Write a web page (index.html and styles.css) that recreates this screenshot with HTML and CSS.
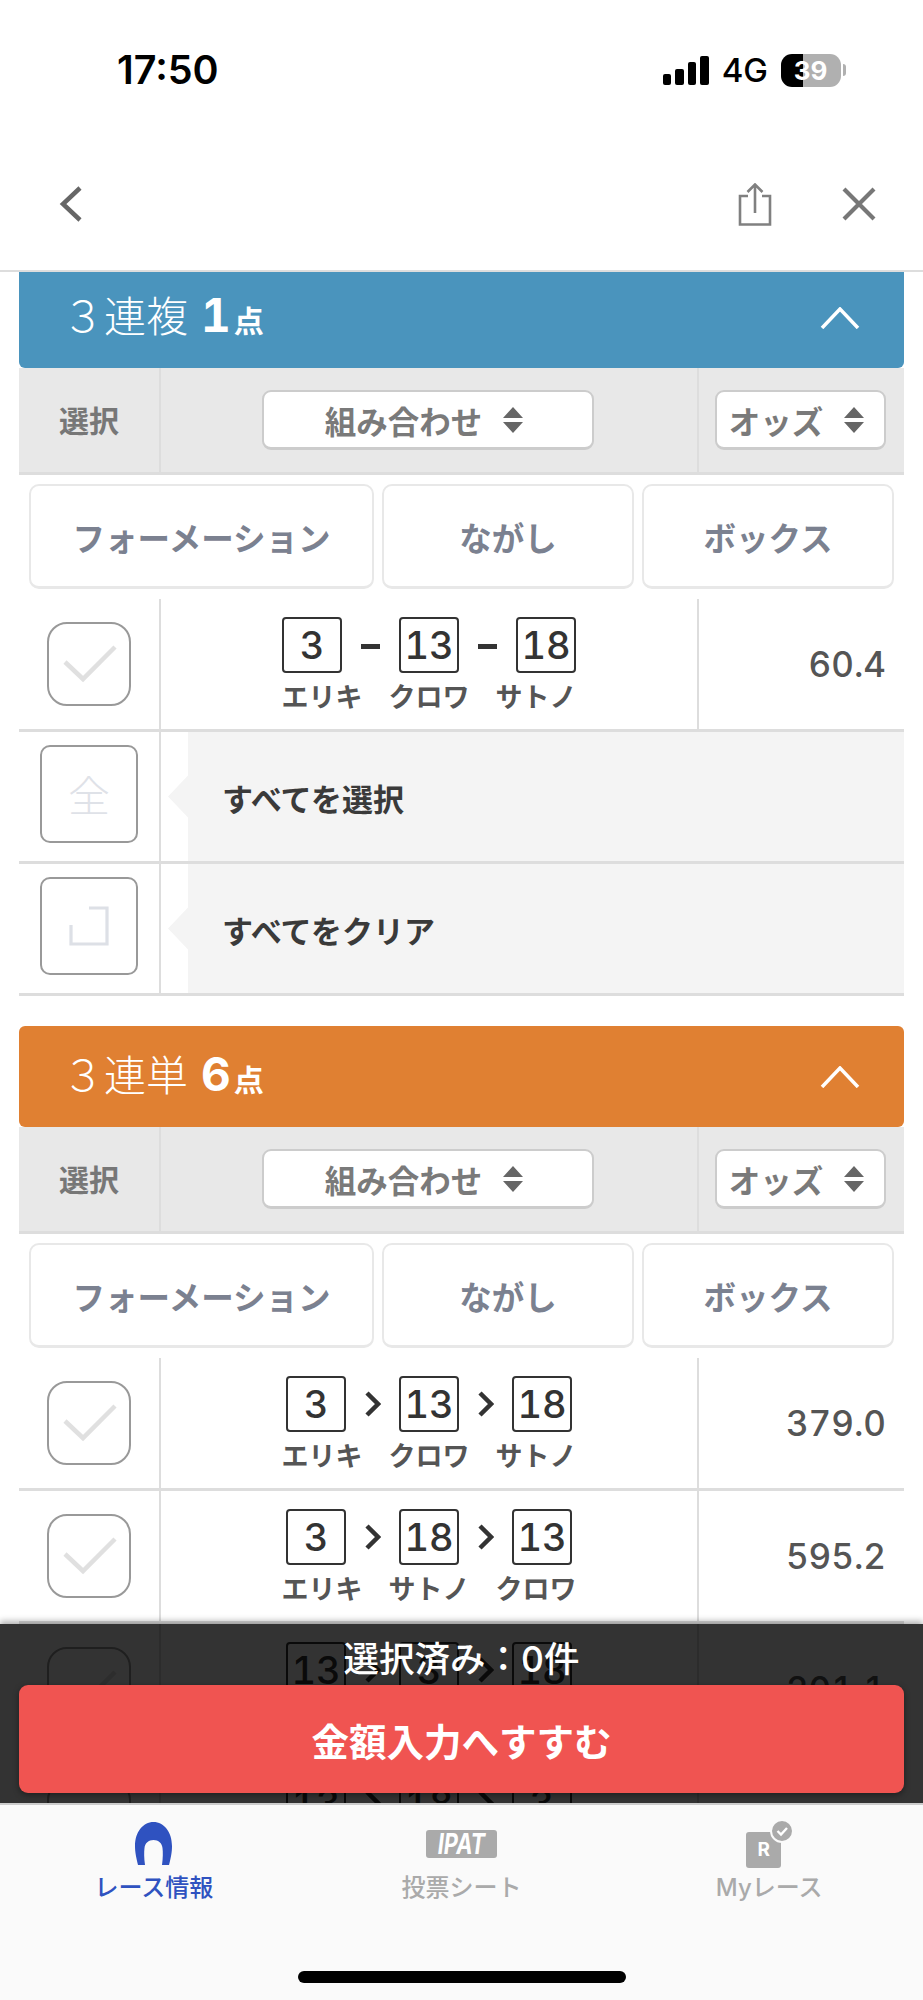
FILE: index.html
```html
<!DOCTYPE html>
<html lang="ja">
<head>
<meta charset="utf-8">
<title>3連複</title>
<link rel="stylesheet" href="styles.css">
</head>
<body>
<svg class="defs" width="0" height="0" aria-hidden="true">
  <symbol id="check" viewBox="0 0 79 79"><polyline points="16,38 34,55 66,23" fill="none" stroke="#e0e0e0" stroke-width="4.5"/></symbol>
  <symbol id="sort" viewBox="0 0 20 26"><path d="M10 0 L20 11 H0 Z M0 15 H20 L10 26 Z" fill="#666"/></symbol>
  <symbol id="up" viewBox="0 0 40 22"><polyline points="2,21 20,2 38,21" fill="none" stroke="#fff" stroke-width="3.5"/></symbol>
  <symbol id="gt" viewBox="0 0 17 26"><polyline points="3,2 14,13 3,24" fill="none" stroke="#333" stroke-width="4.5"/></symbol>
</svg>
<div class="app">
  <div class="status">
    <span class="time">17:50</span>
    <div class="status-right">
      <div class="signal"><i class="b1"></i><i class="b2"></i><i class="b3"></i><i class="b4"></i></div>
      <span class="net">4G</span>
      <div class="battery"><span>39</span></div>
      <i class="battery-cap"></i>
    </div>
  </div>
  <div class="nav">
    <svg class="nav-back" width="24" height="36" viewBox="0 0 24 36"><polyline points="21,2 4,18 21,34" fill="none" stroke="#666" stroke-width="4.5"/></svg>
    <div class="nav-right">
      <svg width="34" height="43" viewBox="0 0 34 43"><path d="M10 13 H2 V41.5 H32 V13 H24 M17 30 V2 M9.5 9 L17 1.5 L24.5 9" fill="none" stroke="#808080" stroke-width="2.6"/></svg>
      <svg width="36" height="36" viewBox="0 0 36 36"><path d="M3 3 L33 33 M33 3 L3 33" fill="none" stroke="#777" stroke-width="4.2"/></svg>
    </div>
  </div>

  <div class="main">
    <div class="content">
      <section class="sec">
        <div class="head head-blue">
          <div class="head-title">３連複<b>1</b><em>点</em></div>
          <svg width="40" height="22"><use href="#up"/></svg>
        </div>
        <div class="cols sortrow">
          <div class="cell sort-label">選択</div>
          <div class="cell line"><div class="sortbtn wide">組み合わせ<svg width="20" height="26"><use href="#sort"/></svg></div></div>
          <div class="cell line"><div class="sortbtn odd">オッズ<svg width="20" height="26"><use href="#sort"/></svg></div></div>
        </div>
        <div class="tabs"><div class="tab">フォーメーション</div><div class="tab">ながし</div><div class="tab">ボックス</div></div>
        <div class="cols row">
          <div class="cell"><div class="chk"><svg width="79" height="79"><use href="#check"/></svg></div></div>
          <div class="cell line combo">
            <div class="nums dash"><span class="num">3</span><i class="sep"></i><span class="num">13</span><i class="sep"></i><span class="num">18</span></div>
            <div class="names"><span>エリキ</span><span>クロワ</span><span>サトノ</span></div>
          </div>
          <div class="cell line odds">60.4</div>
        </div>
        <div class="cols2 action">
          <div class="cell"><div class="actbtn">全</div></div>
          <div class="cell line"><div class="panel">すべてを選択</div></div>
        </div>
        <div class="cols2 action">
          <div class="cell"><div class="actbtn"><svg width="40" height="40" viewBox="0 0 40 40"><polyline points="20,2 38,2 38,38 2,38 2,19" fill="none" stroke="#dde0e6" stroke-width="3.2"/></svg></div></div>
          <div class="cell line"><div class="panel">すべてをクリア</div></div>
        </div>
      </section>

      <section class="sec sec-next">
        <div class="head head-orange">
          <div class="head-title">３連単<b>6</b><em>点</em></div>
          <svg width="40" height="22"><use href="#up"/></svg>
        </div>
        <div class="cols sortrow">
          <div class="cell sort-label">選択</div>
          <div class="cell line"><div class="sortbtn wide">組み合わせ<svg width="20" height="26"><use href="#sort"/></svg></div></div>
          <div class="cell line"><div class="sortbtn odd">オッズ<svg width="20" height="26"><use href="#sort"/></svg></div></div>
        </div>
        <div class="tabs"><div class="tab">フォーメーション</div><div class="tab">ながし</div><div class="tab">ボックス</div></div>
        <div class="cols row">
          <div class="cell"><div class="chk"><svg width="79" height="79"><use href="#check"/></svg></div></div>
          <div class="cell line combo">
            <div class="nums"><span class="num">3</span><svg class="gt" width="17" height="26"><use href="#gt"/></svg><span class="num">13</span><svg class="gt" width="17" height="26"><use href="#gt"/></svg><span class="num">18</span></div>
            <div class="names"><span>エリキ</span><span>クロワ</span><span>サトノ</span></div>
          </div>
          <div class="cell line odds">379.0</div>
        </div>
        <div class="cols row">
          <div class="cell"><div class="chk"><svg width="79" height="79"><use href="#check"/></svg></div></div>
          <div class="cell line combo">
            <div class="nums"><span class="num">3</span><svg class="gt" width="17" height="26"><use href="#gt"/></svg><span class="num">18</span><svg class="gt" width="17" height="26"><use href="#gt"/></svg><span class="num">13</span></div>
            <div class="names"><span>エリキ</span><span>サトノ</span><span>クロワ</span></div>
          </div>
          <div class="cell line odds">595.2</div>
        </div>
        <div class="cols row">
          <div class="cell"><div class="chk"><svg width="79" height="79"><use href="#check"/></svg></div></div>
          <div class="cell line combo">
            <div class="nums"><span class="num">13</span><svg class="gt" width="17" height="26"><use href="#gt"/></svg><span class="num">3</span><svg class="gt" width="17" height="26"><use href="#gt"/></svg><span class="num">18</span></div>
            <div class="names"><span>クロワ</span><span>エリキ</span><span>サトノ</span></div>
          </div>
          <div class="cell line odds">201.1</div>
        </div>
        <div class="cols row">
          <div class="cell"><div class="chk"><svg width="79" height="79"><use href="#check"/></svg></div></div>
          <div class="cell line combo">
            <div class="nums"><span class="num">13</span><svg class="gt" width="17" height="26"><use href="#gt"/></svg><span class="num">18</span><svg class="gt" width="17" height="26"><use href="#gt"/></svg><span class="num">3</span></div>
            <div class="names"><span>クロワ</span><span>サトノ</span><span>エリキ</span></div>
          </div>
          <div class="cell line odds">412.8</div>
        </div>
      </section>
    </div>
    <div class="overlay">
      <div class="selected">選択済み：0件</div>
      <div class="go">金額入力へすすむ</div>
    </div>
  </div>

  <div class="tabbar">
    <div class="bar-items">
      <div class="bar-item active">
        <div class="bar-icon"><svg width="37" height="43" viewBox="0 0 37 43"><path d="M3 43 C1 35 0 30 0 24 C0 10 8 0 18.5 0 C29 0 37 10 37 24 C37 30 36 35 34 43 L27 43 C28 36 28 30 27.5 26 C27 21 23.5 18 18.5 18 C13.5 18 10 21 9.5 26 C9 30 9 36 10 43 Z" fill="#2f52c0"/></svg></div>
        <span>レース情報</span>
      </div>
      <div class="bar-item">
        <div class="bar-icon"><div class="ipat"><span class="ipat-text">IPAT</span></div></div>
        <span>投票シート</span>
      </div>
      <div class="bar-item">
        <div class="bar-icon">
          <div class="myrace">R
            <svg class="myrace-badge" width="24" height="24" viewBox="0 0 24 24"><circle cx="12" cy="12" r="11" fill="#aaa" stroke="#fafafa" stroke-width="2"/><polyline points="7.5,12 11,15.5 17,9" fill="none" stroke="#fff" stroke-width="2.4"/></svg>
          </div>
        </div>
        <span>Myレース</span>
      </div>
    </div>
    <div class="homebar"></div>
  </div>
</div>
</body>
</html>
```
FILE: styles.css
```css
* { box-sizing: border-box; }
html, body { margin: 0; padding: 0; background: #fff; }
body { font-family: "Inter", "Noto Sans CJK JP", sans-serif; color: #333; }
.defs { display: block; height: 0; }
.app { width: 923px; height: 2000px; display: flex; flex-direction: column; overflow: hidden; }

/* status bar */
.status { height: 108px; flex: none; display: flex; justify-content: space-between; align-items: flex-start; padding: 47px 77px 0 117px; color: #000; }
.time { font-size: 39.5px; font-weight: 600; line-height: 46px; }
.status-right { display: flex; align-items: center; height: 46px; }
.signal { display: flex; align-items: flex-end; gap: 4px; height: 29px; margin-right: 13px; }
.signal i { display: block; width: 8.5px; background: #000; border-radius: 2px; }
.b1 { height: 11px; }
.b2 { height: 16px; }
.b3 { height: 23px; }
.b4 { height: 29px; }
.net { font-size: 33px; font-weight: 500; line-height: 44px; margin-right: 13px; }
.battery { width: 60px; height: 33px; border-radius: 11px; background: linear-gradient(90deg, #000 37%, #b0b0b0 37%); color: #fff; display: flex; align-items: center; justify-content: center; font-size: 26px; font-weight: 700; }
.battery span { margin-left: -1px; }
.battery-cap { display: block; width: 3px; height: 12px; margin-left: 2px; background: #b0b0b0; border-radius: 0 3px 3px 0; }

/* nav */
.nav { height: 164px; flex: none; padding: 30px 46px 0 59px; display: flex; justify-content: space-between; align-items: center; border-bottom: 2px solid #ddd; }
.nav-right { display: flex; align-items: center; gap: 69px; }

/* main */
.main { flex: 1; position: relative; overflow: hidden; }
.content { margin: -5px 19px 0; }
.sec-next { margin-top: 30px; }
.head { height: 101px; border-radius: 6px; display: flex; align-items: center; justify-content: space-between; padding: 0 44px 0 43px; color: #fff; }
.head-blue { background: #4a94bd; }
.head-orange { background: #e08032; }
.head-title { font-size: 42px; font-weight: 300; line-height: 56px; display: flex; align-items: baseline; }
.head-title b { font-size: 46px; font-weight: 700; margin-left: 13px; font-variant-numeric: tabular-nums; }
.head-title em { font-style: normal; font-size: 30px; font-weight: 700; margin-left: 3px; }

.cols { display: grid; grid-template-columns: 140px 538px 207px; }
.cols2 { display: grid; grid-template-columns: 140px 745px; }
.cell { display: flex; align-items: center; justify-content: center; min-width: 0; }
.line { border-left: 2px solid #ddd; }

.sortrow { height: 107px; background: #e8e8e8; border-bottom: 3px solid #ddd; }
.sort-label { font-size: 30px; font-weight: 700; color: #777; padding-bottom: 3px; }
.sortbtn { height: 60px; flex: none; background: #fff; border: 2px solid #ccc; border-bottom-width: 3px; border-radius: 9px; display: flex; align-items: center; justify-content: center; font-size: 31.5px; font-weight: 700; color: #7a7a7a; }
.sortbtn svg { margin-left: 21px; }
.wide { width: 332px; margin-right: 2px; padding-right: 8px; }
.odd { width: 171px; margin: 0 18px 0 16px; padding-right: 8px; }

.tabs { display: grid; grid-template-columns: 345px 252px 252px; gap: 8px; padding: 9px 10px 0; height: 124px; }
.tab { height: 105px; border: 2px solid #e8e8e8; border-bottom-width: 3px; border-radius: 10px; background: #fff; display: flex; align-items: center; justify-content: center; font-size: 32.5px; font-weight: 700; color: #7b8190; }

.row { height: 133px; border-bottom: 3px solid #ddd; }
.chk { width: 84px; height: 84px; border: 2.5px solid #999; border-radius: 20px; }
.chk svg { display: block; }
.combo { flex-direction: column; }
.nums { display: flex; align-items: center; }
.num { width: 60px; height: 56px; border: 2px solid #333; border-radius: 4px; display: flex; align-items: center; justify-content: center; font-size: 38px; font-weight: 500; color: #333; font-variant-numeric: tabular-nums; }
.gt { margin: 0 18px; }
.sep { display: block; width: 19px; height: 5px; margin: 3px 19px 0; background: #333; }
.names { display: flex; gap: 26px; margin-top: 12px; font-size: 27px; line-height: 26px; font-weight: 700; color: #555; }
.odds { justify-content: flex-end; padding-right: 18px; font-size: 35px; font-weight: 500; color: #555; font-variant-numeric: tabular-nums; }

.action { height: 132px; border-bottom: 3px solid #ddd; }
.action .line { justify-content: flex-start; align-items: stretch; }
.actbtn { width: 98px; height: 98px; margin-bottom: 6px; border: 2.5px solid #999; border-radius: 10px; display: flex; align-items: center; justify-content: center; font-size: 42px; font-weight: 300; color: #dfe2e8; }
.panel { flex: 1; margin-left: 7px; padding: 2px 0 0 54px; background: #f4f4f4; display: flex; align-items: center; font-size: 31px; font-weight: 700; color: #3a3a3a;
  clip-path: polygon(20px 0, 100% 0, 100% 100%, 20px 100%, 20px calc(50% + 21px), 0 50%, 20px calc(50% - 21px)); }

/* overlay */
.overlay { position: absolute; left: 0; right: 0; bottom: 0; height: 179px; background: rgba(0, 0, 0, 0.8); box-shadow: 0 -3px 6px rgba(0, 0, 0, 0.3); padding: 4px 19px 10px; display: flex; flex-direction: column; }
.selected { height: 57px; flex: none; display: flex; align-items: center; justify-content: center; color: #fff; font-size: 35.5px; font-weight: 500; }
.go { height: 108px; flex: none; background: #f05451; border-radius: 9px; display: flex; align-items: center; justify-content: center; color: #fff; font-size: 37.5px; font-weight: 700; box-shadow: 0 2px 6px rgba(0, 0, 0, 0.4); }

/* tab bar */
.tabbar { height: 197px; flex: none; background: #fafafa; border-top: 2px solid #ccc; }
.bar-items { display: grid; grid-template-columns: repeat(3, 1fr); padding-top: 17px; }
.bar-item { display: flex; flex-direction: column; align-items: center; font-size: 24px; line-height: 30px; font-weight: 500; color: #aaa; }
.bar-item.active { color: #2f52c0; }
.bar-icon { height: 51px; display: flex; align-items: flex-start; justify-content: center; }
.ipat { margin-top: 8px; width: 71px; height: 28px; background: #aaa; border-radius: 3px; color: #fff; font-size: 28px; line-height: 28px; font-weight: 700; font-style: italic; text-align: center; }
.ipat-text { display: inline-block; transform: scaleX(0.78); }
.myrace { position: relative; margin: 10px 11px 0 0; width: 35px; height: 36px; background: #aaa; border-radius: 3px; color: #fff; font-size: 19px; line-height: 36px; font-weight: 700; text-align: center; }
.myrace-badge { position: absolute; right: -13px; top: -13px; }
.homebar { width: 328px; height: 12px; margin: 68px auto 0; background: #000; border-radius: 6px; }
```
